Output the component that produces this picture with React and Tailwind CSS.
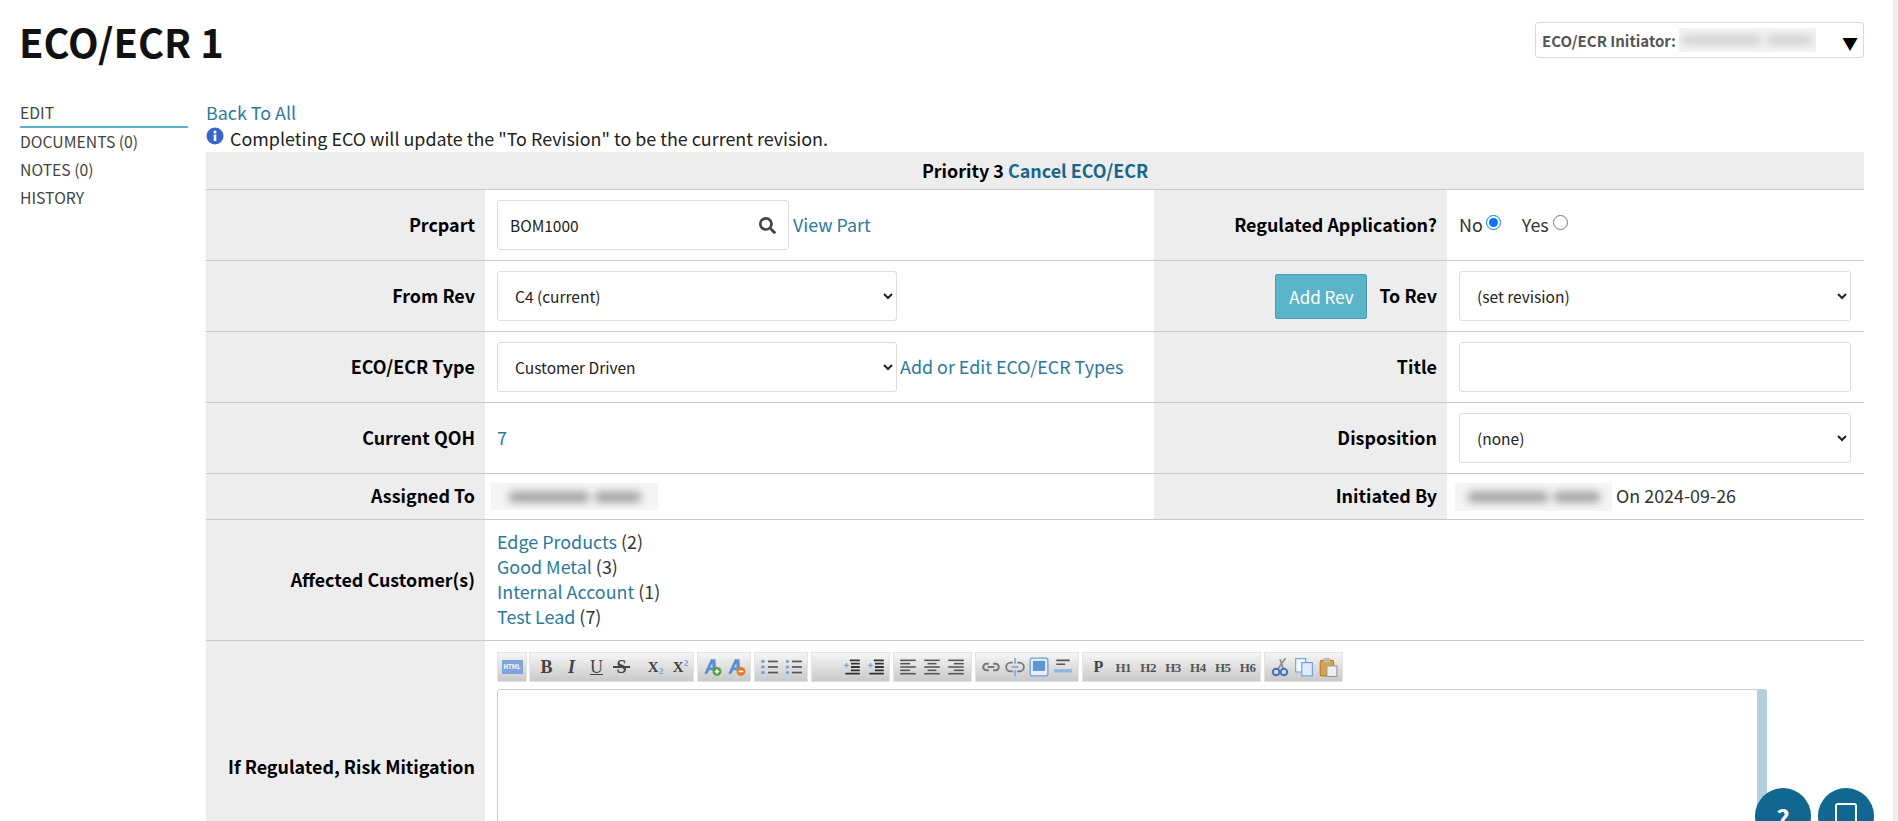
import { FaSearch } from 'react-icons/fa';

const link = 'text-[#2b7a9c]';
const customers = [
  ['Edge Products', 2],
  ['Good Metal', 3],
  ['Internal Account', 1],
  ['Test Lead', 7],
];
const sideItems = ['DOCUMENTS (0)', 'NOTES (0)', 'HISTORY'];

function Blurred({ className, bar = 'bg-[#9c9c9c]' }) {
  return (
    <div className={`flex items-center justify-center overflow-hidden bg-[#f5f5f5] ${className}`}>
      <div className="flex items-center gap-[6px] blur-[4px]">
        <div className={`h-[10px] w-[80px] rounded-sm ${bar}`} />
        <div className={`h-[10px] w-[46px] rounded-sm ${bar}`} />
      </div>
    </div>
  );
}

function Label({ width, children, className = 'pb-[2px]' }) {
  return (
    <div className={`flex shrink-0 items-center justify-end bg-[#ededed] pr-[10px] font-bold text-black ${width} ${className}`}>
      {children}
    </div>
  );
}

function Row({ height, children }) {
  return <div className={`flex border-b border-[#c9c9c9] ${height}`}>{children}</div>;
}

function Select({ width, value }) {
  return (
    <select
      defaultValue={value}
      className={`h-[50px] rounded-[3px] border border-[#dddddd] bg-white pl-[13px] text-[15.5px] text-[#222] ${width}`}
    >
      <option>{value}</option>
    </select>
  );
}

function Group({ width, children, className = '' }) {
  return (
    <div className={`flex h-[30px] shrink-0 items-center border border-[#e4e4e4] bg-gradient-to-b from-[#f6f6f6] to-[#c9c9c9] ${width} ${className}`}>
      {children}
    </div>
  );
}

function Glyph({ children, className = '' }) {
  return (
    <span className={`relative flex w-[25px] items-center justify-center font-['Liberation_Serif',serif] leading-none font-bold text-[#444] ${className}`}>
      {children}
    </span>
  );
}

function Icon({ children }) {
  return (
    <svg viewBox="0 0 18 18" className="mx-[2px] h-[20px] w-[20px] shrink-0">
      {children}
    </svg>
  );
}

function Lines({ kind }) {
  const rows = [3, 6, 9, 12, 15];
  const spec = {
    left: [[2, 16], [2, 11], [2, 16], [2, 11], [2, 16]],
    center: [[2, 16], [5, 13], [2, 16], [5, 13], [2, 16]],
    right: [[2, 16], [7, 16], [2, 16], [7, 16], [2, 16]],
  }[kind];
  return (
    <Icon>
      {rows.map((y, i) => (
        <line key={y} x1={spec[i][0]} x2={spec[i][1]} y1={y} y2={y} stroke="#555" strokeWidth="1.4" />
      ))}
    </Icon>
  );
}

function ListIcon({ numbered }) {
  return (
    <Icon>
      {[4, 9, 14].map((y) => (
        <g key={y}>
          {numbered ? (
            <line x1="2" x2="5" y1={y} y2={y} stroke="#6d9fdc" strokeWidth="2.4" />
          ) : (
            <circle cx="4" cy={y} r="1.4" fill="#6d9fdc" />
          )}
          <line x1="8" x2="17" y1={y} y2={y} stroke="#555" strokeWidth="1.5" />
        </g>
      ))}
    </Icon>
  );
}

function Indent() {
  return (
    <Icon>
      <path d="M7 3h9M8 6h8M8 9h8M8 12h8M3 15h13" stroke="#333" strokeWidth="1.7" />
      <path d="M2 7.5h4M4 5.5v4" stroke="#6d9fdc" strokeWidth="1.2" />
    </Icon>
  );
}

function ColorA({ add }) {
  return (
    <Icon>
      <path d="M2 15 8 2h4l1 13h-3l-.2-3H6.5L5 15zM7.5 9.5h2l-.3-4z" fill="#5c8fd0" />
      <circle cx="13.5" cy="13" r="4" fill={add ? '#55a03c' : '#e07b2e'} />
      <path d={add ? 'M11.5 13h4M13.5 11v4' : 'M11.5 13h4'} stroke="#fff" strokeWidth="1.4" />
    </Icon>
  );
}

function Toolbar() {
  return (
    <div className="flex gap-[2px] pt-[11px]">
      <Group width="w-[30px]" className="justify-center">
        <div className="flex h-[14px] w-[21px] items-center justify-center bg-[#7ea6dc] text-[6px] leading-none font-bold text-white">
          HTML
        </div>
      </Group>
      <Group width="w-[165px]" className="pl-[4px]">
        <Glyph className="text-[18px]">B</Glyph>
        <Glyph className="text-[18px] italic">I</Glyph>
        <Glyph className="text-[18px] font-normal underline">U</Glyph>
        <Glyph className="text-[18px]">
          S
          <span className="absolute top-[8px] left-[4px] h-[1.5px] w-[17px] bg-[#444]" />
        </Glyph>
        <span className="w-[9px] shrink-0" />
        <Glyph className="text-[15px]">
          X<span className="mt-[8px] text-[9px] text-[#6d9fdc]">2</span>
        </Glyph>
        <Glyph className="text-[15px]">
          X<span className="mb-[8px] text-[9px] text-[#6d9fdc]">2</span>
        </Glyph>
      </Group>
      <Group width="w-[54px]" className="ml-[1px] pl-[2px]">
        <ColorA add />
        <ColorA />
      </Group>
      <Group width="w-[54px]" className="ml-[1px] pl-[2px]">
        <ListIcon numbered />
        <ListIcon />
      </Group>
      <Group width="w-[79px]" className="ml-[1px] justify-end pr-[1px]">
        <Indent />
        <Indent />
      </Group>
      <Group width="w-[79px]" className="ml-[1px] pl-[2px]">
        <Lines kind="left" />
        <Lines kind="center" />
        <Lines kind="right" />
      </Group>
      <Group width="w-[104px]" className="ml-[1px] pl-[3px]">
        <Icon>
          <path d="M7 6H5a3 3 0 0 0 0 6h2M11 6h2a3 3 0 0 1 0 6h-2M6 9h6" fill="none" stroke="#777" strokeWidth="1.8" />
        </Icon>
        <Icon>
          <path d="M7 5 5 5a4 4 0 0 0 0 8h2M11 5h2a4 4 0 0 1 0 8h-2" fill="none" stroke="#777" strokeWidth="1.6" />
          <path d="M9 1v5M9 12v5M6 9h6" stroke="#6d9fdc" strokeWidth="1.3" />
        </Icon>
        <Icon>
          <rect x="1" y="1" width="16" height="16" rx="2" fill="#e7f0fa" stroke="#6d9fdc" strokeWidth="1.2" />
          <rect x="3.5" y="3.5" width="11" height="9" fill="#5d97d1" />
        </Icon>
        <Icon>
          <path d="M3 3h12M3 6.5h8" stroke="#555" strokeWidth="1.5" />
          <rect x="1" y="11" width="16" height="3" fill="#8fb6e2" />
        </Icon>
      </Group>
      <Group width="w-[179px]" className="ml-[1px] pl-[3px]">
        {['P', 'H1', 'H2', 'H3', 'H4', 'H5', 'H6'].map((h) => (
          <Glyph key={h} className={h === 'P' ? 'text-[16px]' : 'text-[13px] tracking-[-0.5px] text-[#555]'}>
            {h}
          </Glyph>
        ))}
      </Group>
      <Group width="w-[79px]" className="ml-[1px] pl-[3px]">
        <Icon>
          <path d="M14 1 7 11M9 2l3 9" stroke="#8a8a8a" strokeWidth="1.5" />
          <circle cx="5.5" cy="13.5" r="3" fill="none" stroke="#3f74b8" strokeWidth="1.8" />
          <circle cx="12.5" cy="13.5" r="3" fill="none" stroke="#3f74b8" strokeWidth="1.8" />
        </Icon>
        <Icon>
          <rect x="1.5" y="1.5" width="9" height="12" fill="#f2f7fd" stroke="#6d9fdc" />
          <rect x="7" y="5" width="9.5" height="12" fill="#dfeafa" stroke="#6d9fdc" />
        </Icon>
        <Icon>
          <rect x="2" y="3" width="12" height="14" rx="1.5" fill="#dca24a" stroke="#b47d2c" />
          <rect x="5" y="1" width="6" height="4" rx="1" fill="#b9b9b9" />
          <rect x="8" y="8" width="9" height="9.5" fill="#efefef" stroke="#999" />
        </Icon>
      </Group>
    </div>
  );
}

export default function App() {
  return (
    <div className="relative h-[821px] overflow-hidden border-r-[5px] border-[#eeeeee] bg-white font-['Noto_Sans_CJK_SC',sans-serif] text-[17.9px] leading-[25px] text-[#222]">
      <header className="flex items-start justify-between pr-[29px] pt-[22px] pl-5">
        <h1 className="-mt-[1px] -ml-[1px] text-[39.8px] leading-[40px] font-bold text-[#111]">ECO/ECR 1</h1>
        <div className="relative flex h-[36px] w-[329px] items-center rounded-[3px] border border-[#d9d9d9] pl-[6px] text-[15px] font-bold text-[#555]">
          ECO/ECR Initiator:
          <Blurred className="ml-[3px] h-[24px] w-[137px]" bar="bg-[#d0d0d0]" />
          <span className="absolute top-[8px] right-[5px] text-[16px] leading-[24px] text-black">▼</span>
        </div>
      </header>

      <div className="flex pt-[39px] pl-5">
        <nav className="w-[168px] shrink-0 pt-[2px] text-[15.75px] leading-[22px] text-[#444]">
          <div className="h-[26px] border-b-2 border-[#5fb4c9]">EDIT</div>
          <div className="flex flex-col gap-[6px] pt-[3px]">
            {sideItems.map((item) => (
              <div key={item}>{item}</div>
            ))}
          </div>
        </nav>

        <main className="ml-[18px] flex-1 pr-[29px]">
          <div className={`h-[25px] ${link}`}>Back To All</div>
          <div className="flex h-[27px] items-center">
            <svg viewBox="0 0 18 18" className="mb-[5px] mr-[6px] h-[18px] w-[18px]">
              <circle cx="9" cy="9" r="8.5" fill="#3b66c9" />
              <circle cx="9" cy="5" r="1.5" fill="#fff" />
              <rect x="7.7" y="7.5" width="2.6" height="6.5" fill="#fff" />
            </svg>
            Completing ECO will update the "To Revision" to be the current revision.
          </div>

          <Row height="h-[38px]">
            <div className="flex flex-1 items-center justify-center bg-[#ededed] font-bold text-black">
              Priority 3&nbsp;<span className="text-[#17678c]">Cancel ECO/ECR</span>
            </div>
          </Row>

          <Row height="h-[71px]">
            <Label width="w-[279px]">Prcpart</Label>
            <div className="flex w-[669px] items-center pl-[12px]">
              <div className="flex h-[50px] w-[292px] items-center justify-between rounded-[3px] border border-[#dddddd] pr-[12px] pl-[12px] text-[15.5px]">
                BOM1000
                <FaSearch className="text-[17px] text-[#444]" />
              </div>
              <span className={`mb-[2px] ml-[4px] ${link}`}>View Part</span>
            </div>
            <Label width="w-[293px]">Regulated Application?</Label>
            <div className="flex flex-1 items-center pb-[2px] pl-[12px] text-[#333]">
              No
              <input type="radio" name="regulated" defaultChecked className="mb-[3px] ml-[3px] h-[15px] w-[15px]" />
              <span className="ml-[21px]">Yes</span>
              <input type="radio" name="regulated" className="mb-[3px] ml-[4px] h-[15px] w-[15px]" />
            </div>
          </Row>

          <Row height="h-[71px]">
            <Label width="w-[279px]">From Rev</Label>
            <div className="flex w-[669px] items-center pl-[12px]">
              <Select width="w-[400px]" value="C4 (current)" />
            </div>
            <Label width="w-[293px]">
              <button className="mt-[2px] mr-[12px] h-[45px] w-[92px] rounded-[2px] border border-[#4a9cb3] bg-[#5ab4ca] text-[17px] font-normal text-white">
                Add Rev
              </button>
              To Rev
            </Label>
            <div className="flex flex-1 items-center pl-[12px]">
              <Select width="w-[392px]" value="(set revision)" />
            </div>
          </Row>

          <Row height="h-[71px]">
            <Label width="w-[279px]">ECO/ECR Type</Label>
            <div className="flex w-[669px] items-center pl-[12px]">
              <Select width="w-[400px]" value="Customer Driven" />
              <span className={`mb-[2px] ml-[3px] ${link}`}>Add or Edit ECO/ECR Types</span>
            </div>
            <Label width="w-[293px]">Title</Label>
            <div className="flex flex-1 items-center pl-[12px]">
              <input className="h-[50px] w-[392px] rounded-[3px] border border-[#dddddd]" />
            </div>
          </Row>

          <Row height="h-[71px]">
            <Label width="w-[279px]">Current QOH</Label>
            <div className={`flex w-[669px] items-center pb-[2px] pl-[12px] ${link}`}>7</div>
            <Label width="w-[293px]">Disposition</Label>
            <div className="flex flex-1 items-center pl-[12px]">
              <Select width="w-[392px]" value="(none)" />
            </div>
          </Row>

          <Row height="h-[46px]">
            <Label width="w-[279px]">Assigned To</Label>
            <div className="flex w-[669px] items-center pl-[6px]">
              <Blurred className="h-[27px] w-[167px]" />
            </div>
            <Label width="w-[293px]">Initiated By</Label>
            <div className="flex flex-1 items-center pl-[8px] text-[#333]">
              <Blurred className="h-[28px] w-[157px]" />
              <span className="mb-[2px] ml-[4px]">On 2024-09-26</span>
            </div>
          </Row>

          <Row height="h-[121px]">
            <Label width="w-[279px]">Affected Customer(s)</Label>
            <div className="flex flex-col justify-center pb-[2px] pl-[12px] text-[#333]">
              {customers.map(([name, count]) => (
                <div key={name}>
                  <span className={link}>{name}</span> ({count})
                </div>
              ))}
            </div>
          </Row>

          <div className="flex h-[300px]">
            <Label width="w-[279px]" className="pb-[50px]">If Regulated, Risk Mitigation</Label>
            <div className="flex-1 pl-[12px]">
              <Toolbar />
              <div className="mt-[7px] flex h-[220px]">
                <div className="w-[1261px] rounded-tl-[3px] border border-[#cccccc]" />
                <div className="w-[9px] rounded-tr-[3px] bg-[#b3d0de]" />
              </div>
            </div>
          </div>
        </main>
      </div>

      <button className="absolute top-[788px] left-[1755px] h-[56px] w-[56px] rounded-full bg-[#10678f] pt-[2px] text-[26px] font-bold text-white">
        ?
      </button>
      <button className="absolute top-[788px] left-[1818px] flex h-[56px] w-[56px] justify-center rounded-full bg-[#10678f] pt-[15px]">
        <span className="h-[32px] w-[22px] rounded-[3px] border-2 border-white" />
      </button>
    </div>
  );
}
